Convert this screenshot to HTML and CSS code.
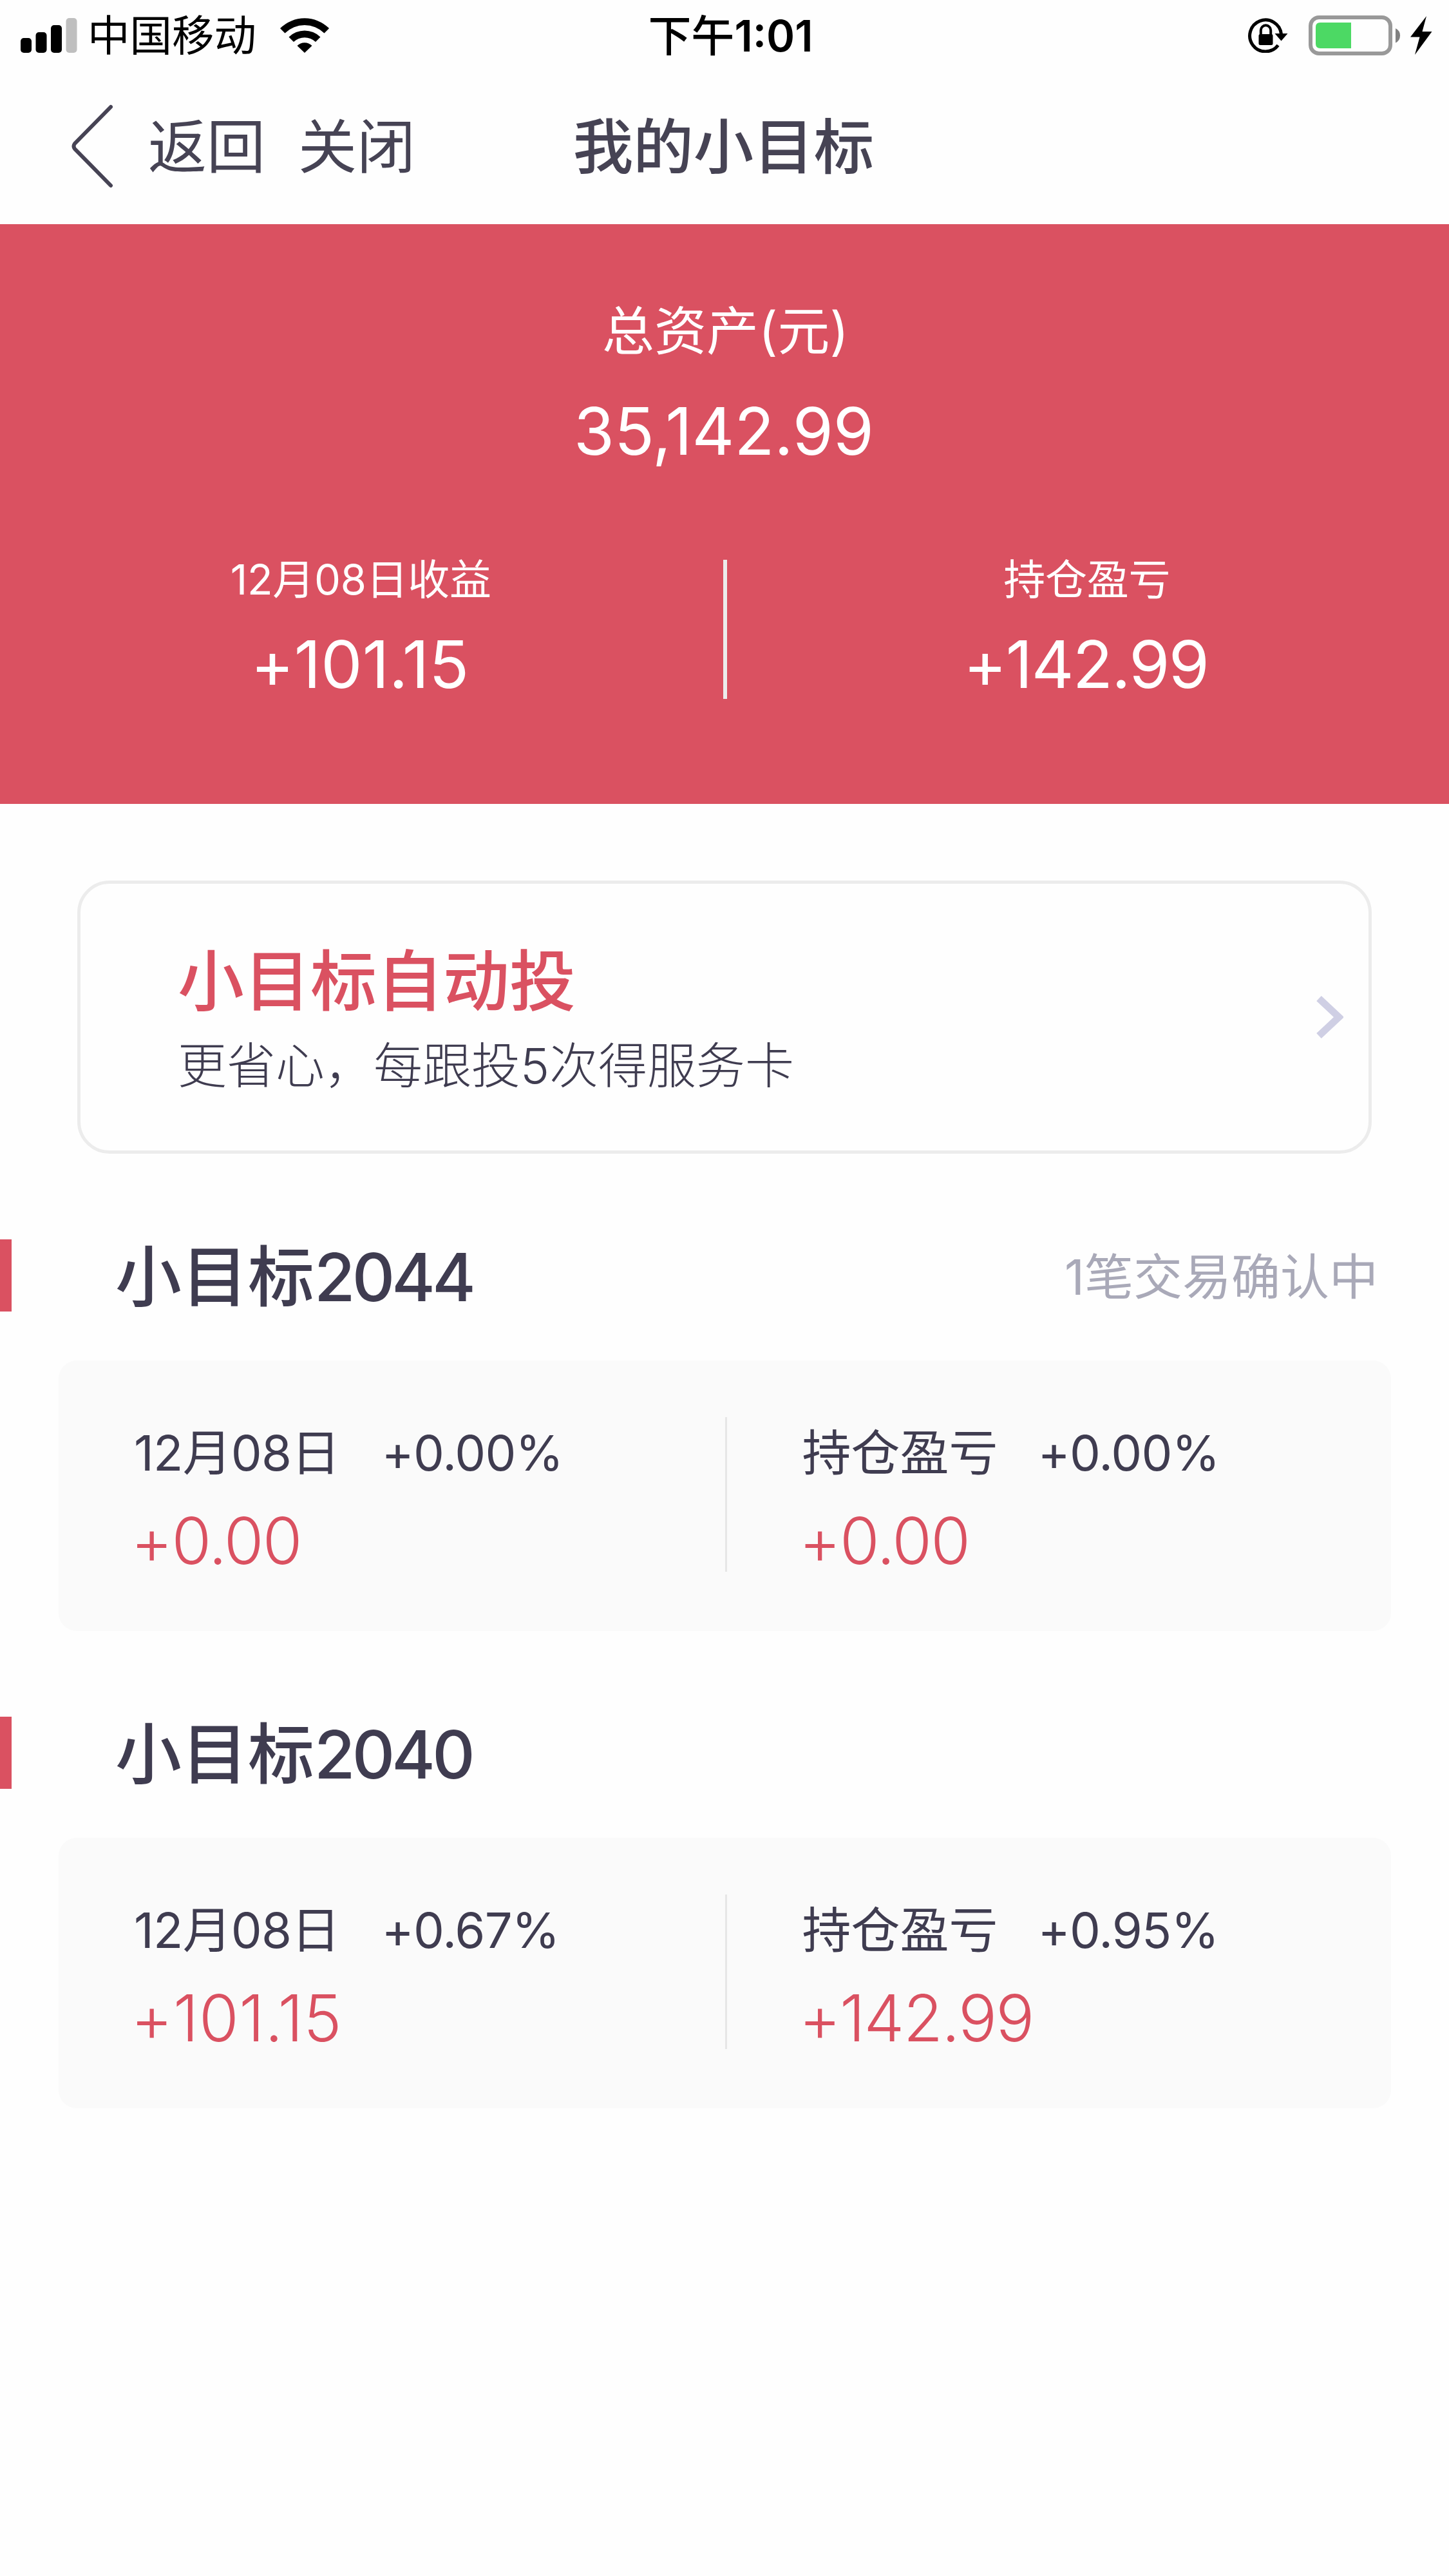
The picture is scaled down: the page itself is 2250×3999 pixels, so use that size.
FILE: index.html
```html
<!DOCTYPE html>
<html lang="zh-CN">
<head>
    <meta charset="UTF-8">
    <meta name="viewport" content="width=device-width, initial-scale=1.0">
    <title>我的小目标</title>
    <link rel="stylesheet" href="styles.css">
</head>
<body>
    <div class="status-bar">
        <div class="status-left">
            <svg class="signal" viewBox="0 0 88 54">
                <rect x="0" y="31" width="17" height="23" rx="5"/>
                <rect x="23.5" y="22" width="17" height="32" rx="5"/>
                <rect x="47" y="11" width="17" height="43" rx="5"/>
                <rect x="70.5" y="0" width="17" height="54" rx="5" fill="#bfbfbf"/>
            </svg>
            <span class="carrier">中国移动</span>
            <svg class="wifi" viewBox="0 0 76 54">
                <path d="M0 16 A54 54 0 0 1 76 16 L68.500 23.500 A43.500 43.500 0 0 0 7.500 23.500 Z"/>
                <path d="M13.500 29.500 A35 35 0 0 1 62.500 29.500 L55 37 A24.500 24.500 0 0 0 21 37 Z"/>
                <path d="M26.500 43 A16.500 16.500 0 0 1 49.500 43 L38 54 Z"/>
            </svg>
        </div>
        <div class="time"><span class="ampm">下午</span><span>1:01</span></div>
        <div class="status-right">
            <svg class="lock" viewBox="0 0 62 54">
                <path d="M46.600 42.300 A24.500 24.500 0 1 1 51.500 25" fill="none" stroke="#000" stroke-width="5"/>
                <path d="M41.500 24 H61.500 L51.500 35.500 Z"/>
                <rect x="16.500" y="25" width="22" height="17" rx="2.500"/>
                <path d="M19.800 26 V19 A7.700 7.700 0 0 1 35.200 19 V26" fill="none" stroke="#000" stroke-width="4"/>
            </svg>
            <svg class="battery" viewBox="0 0 143 62">
                <rect x="3" y="3" width="124" height="56" rx="13" fill="none" stroke="#999" stroke-width="6"/>
                <path d="M66 11 V51 H18 Q11 51 11 44 V18 Q11 11 18 11 Z" fill="#4cd964"/>
                <path d="M135 20 A12.500 12.500 0 0 1 135 42.500 Z" fill="#808080"/>
            </svg>
            <svg class="bolt" viewBox="0 0 34 60">
                <path d="M25 0 L0 32.500 H14.500 L7 60 L33.500 24 H18.500 Z"/>
            </svg>
        </div>
    </div>

    <div class="nav">
        <svg class="back" viewBox="0 0 68 132">
            <path d="M62 5 L6 62 Q3 66 6 70 L62 127"/>
        </svg>
        <span class="nav-link">返回</span>
        <span class="nav-link">关闭</span>
        <h1>我的小目标</h1>
    </div>

    <div class="summary">
        <div class="total-label">总资产(元)</div>
        <div class="total-value">35,142.99</div>
        <div class="stats">
            <div class="stat">
                <div class="stat-label">12月08日收益</div>
                <div class="stat-value"><span class="loose">+101.15</span></div>
            </div>
            <div class="stat-line"></div>
            <div class="stat">
                <div class="stat-label">持仓盈亏</div>
                <div class="stat-value">+142.99</div>
            </div>
        </div>
    </div>

    <div class="auto">
        <div>
            <div class="auto-title">小目标自动投</div>
            <div class="auto-text">更省心，每跟投5次得服务卡</div>
        </div>
        <svg class="arrow" viewBox="0 0 42 66">
            <path d="M4 4 L35 33 L4 62"/>
        </svg>
    </div>

    <div class="goal">
        <div class="goal-head">
            <h2>小目标<span>2044</span></h2>
            <span class="goal-status">1笔交易确认中</span>
        </div>
        <div class="goal-card">
            <div class="cell">
                <div class="cell-label"><span class="date">12月08日</span><span>+0.00%</span></div>
                <div class="cell-value">+0.00</div>
            </div>
            <div class="cell">
                <div class="cell-label"><span class="name">持仓盈亏</span><span>+0.00%</span></div>
                <div class="cell-value">+0.00</div>
            </div>
        </div>
    </div>

    <div class="goal">
        <div class="goal-head">
            <h2>小目标<span>2040</span></h2>
        </div>
        <div class="goal-card">
            <div class="cell">
                <div class="cell-label"><span class="date">12月08日</span><span>+0.67%</span></div>
                <div class="cell-value"><span class="loose">+101.15</span></div>
            </div>
            <div class="cell">
                <div class="cell-label"><span class="name">持仓盈亏</span><span>+0.95%</span></div>
                <div class="cell-value">+142.99</div>
            </div>
        </div>
    </div>
</body>
</html>
```
FILE: styles.css
```css
* {
    box-sizing: border-box;
}

body {
    margin: 0;
    background-color: #fefefe;
    color: #3f3c50;
    font-family: Inter, "Noto Sans CJK SC", sans-serif;
    font-feature-settings: "calt" 0;
}

h1, h2 {
    margin: 0;
    font-weight: 500;
}

svg {
    display: block;
    flex: none;
}

/* status bar */
.status-bar {
    display: grid;
    grid-template-columns: 1fr auto 1fr;
    align-items: center;
    height: 108px;
    padding: 0 26px 0 32px;
    color: #000;
    font-size: 66px;
    line-height: 108px;
}

.status-left, .status-right {
    display: flex;
    align-items: center;
}

.status-right {
    justify-content: flex-end;
}

.signal {
    width: 88px;
    height: 54px;
    margin-right: 16px;
}

.carrier {
    font-size: 65.5px;
    padding-top: 2px;
}

.wifi {
    width: 76px;
    height: 54px;
    margin-left: 37px;
}

.time {
    padding: 2px 0 0 13px;
    font-size: 67px;
    font-weight: 600;
    font-feature-settings: normal;
}

.ampm {
    font-weight: 500;
}

.lock {
    width: 62px;
    height: 54px;
    margin-right: 32px;
}

.battery {
    width: 143px;
    height: 62px;
    margin-right: 15px;
}

.bolt {
    width: 34px;
    height: 60px;
}

/* navigation */
.nav {
    position: relative;
    display: flex;
    align-items: center;
    height: 240px;
    padding-left: 110px;
    font-size: 91px;
    line-height: 242px;
    color: #464354;
}

.back {
    width: 68px;
    height: 132px;
    margin: 0 52px 2px 0;
    fill: none;
    stroke: #464354;
    stroke-width: 6;
    stroke-linecap: round;
}

.nav-link {
    margin-right: 51px;
}

.nav h1 {
    position: absolute;
    left: 0;
    right: 3px;
    text-align: center;
    font-size: 93.5px;
    pointer-events: none;
}

/* summary */
.summary {
    height: 900px;
    padding-top: 106px;
    background-color: #da5161;
    color: #fff;
    text-align: center;
}

.total-label {
    font-size: 81px;
    line-height: 120px;
    padding-left: 3px;
}

.total-value {
    margin-top: 25px;
    padding-right: 2px;
    font-size: 102px;
    line-height: 140px;
    letter-spacing: -0.2px;
}

.stats {
    display: flex;
    margin-top: 130px;
    height: 216px;
    padding-left: 1px;
}

.stat {
    flex: 1;
}

.stat-line {
    width: 6px;
    background-color: #ececec;
}

.stat-label {
    padding-right: 3px;
    font-size: 65px;
    line-height: 62px;
    letter-spacing: -0.3px;
}

.stat-value {
    margin-top: 40px;
    padding-right: 6px;
    font-size: 102px;
    line-height: 120px;
    letter-spacing: -1.7px;
}

.loose {
    letter-spacing: 0;
}

/* auto invest */
.auto {
    display: flex;
    justify-content: space-between;
    height: 424px;
    margin: 119px 120px 0;
    padding: 92px 39px 0 151px;
    border: 5px solid #ececec;
    border-radius: 50px;
}

.auto-title {
    font-size: 103px;
    line-height: 120px;
    font-weight: 500;
    color: #da5161;
}

.auto-text {
    margin-top: 25px;
    font-size: 76px;
    line-height: 90px;
    font-weight: 300;
}

.arrow {
    width: 42px;
    height: 66px;
    margin-top: 82px;
    fill: none;
    stroke: #cfcfe4;
    stroke-width: 11;
}

/* goals */
.goal {
    margin-top: 133px;
}

.goal-head {
    display: flex;
    justify-content: space-between;
    height: 112px;
    padding: 0 110px 0 161px;
    border-left: 18px solid #da5161;
    line-height: 116px;
}

.goal-head h2 {
    font-size: 103px;
    line-height: 118px;
}

.goal-head h2 span {
    letter-spacing: -4.8px;
}

.goal-status {
    font-size: 76px;
    color: #a9a9b8;
}

.goal-card {
    display: grid;
    grid-template-columns: 1fr 1fr;
    height: 420px;
    margin: 76px 90px 0 91px;
    padding-top: 88px;
    border-radius: 28px;
    background-color: #fafafa;
}

.cell {
    height: 240px;
    padding: 10px 0 0 117px;
}

.cell + .cell {
    border-left: 3px solid #e6e6e6;
}

.cell-label {
    font-size: 76px;
    line-height: 90px;
    letter-spacing: -0.8px;
}

.date {
    margin-right: 65px;
}

.name {
    margin-right: 62px;
    letter-spacing: 0;
}

.cell-value {
    margin: 37px 0 0 -5px;
    font-size: 100px;
    line-height: 110px;
    font-weight: 300;
    letter-spacing: -1.8px;
    color: #da5161;
}

.cell-value .loose {
    letter-spacing: 0.6px;
}
```
